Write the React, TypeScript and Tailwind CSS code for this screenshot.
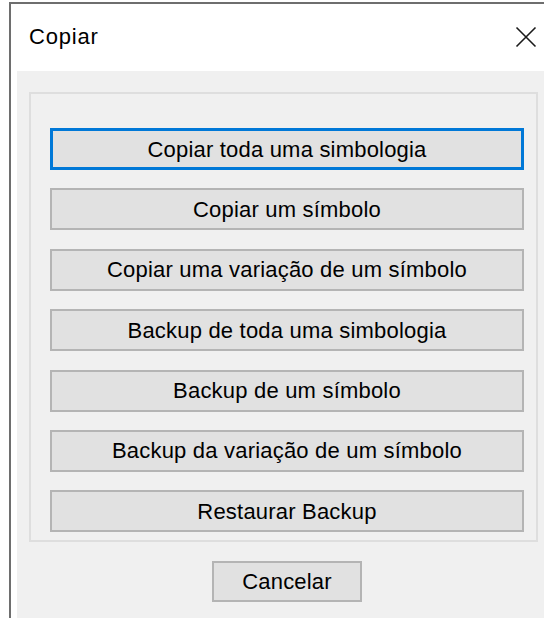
import React from 'react';

const actions = [
  'Copiar toda uma simbologia',
  'Copiar um símbolo',
  'Copiar uma variação de um símbolo',
  'Backup de toda uma simbologia',
  'Backup de um símbolo',
  'Backup da variação de um símbolo',
  'Restaurar Backup',
];

function CloseIcon() {
  return (
    <svg width="22" height="22" viewBox="0 0 22 22" fill="none">
      <path d="M1.5 1.5L20.5 20.5M20.5 1.5L1.5 20.5" stroke="#1a1a1a" strokeWidth="1.6" />
    </svg>
  );
}

export default function App() {
  return (
    <div
      className="w-[544px] h-[618px] overflow-hidden bg-white pl-[9px] pt-[2px] text-black"
      style={{ fontFamily: '"Liberation Sans", Arial, sans-serif' }}
    >
      <div className="h-[700px] w-[600px] flex flex-col border-l-2 border-t-2 border-[#6e6e6e] bg-white">
        {/* title bar */}
        <div className="h-[67px] flex items-center pb-[2px] pl-[18px] w-[526px]">
          <span className="text-[22px] tracking-[0.8px]">Copiar</span>
          <div className="ml-auto">
            <CloseIcon />
          </div>
        </div>

        {/* client area */}
        <div className="ml-[6px] flex-1 bg-[#f0f0f0] pt-[21px] pl-[12px]">
          <div className="w-[509px] border-2 border-[#dedede] pl-[19px] pt-[34px] pb-[8px] flex flex-col gap-[18.4px]">
            {actions.map((label, i) => (
              <button
                key={label}
                className={`w-[474px] h-[42px] flex items-center justify-center bg-[#e1e1e1] text-[22px] tracking-[0.2px] ${
                  i === 0 ? 'border-[3px] border-[#0078d7]' : 'border-2 border-[#b4b4b4]'
                }`}
              >
                {label}
              </button>
            ))}
          </div>
          <div className="pl-[183px] pt-[19px]">
            <button className="w-[150px] h-[41px] flex items-center justify-center bg-[#e1e1e1] border-2 border-[#b4b4b4] text-[22px] tracking-[0.2px]">
              Cancelar
            </button>
          </div>
        </div>
      </div>
    </div>
  );
}
